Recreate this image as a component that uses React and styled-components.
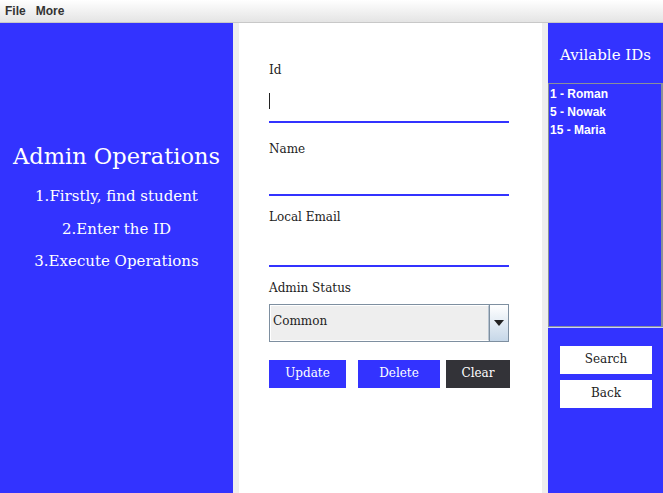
import React from "react";
import styled, { createGlobalStyle } from "styled-components";

const GlobalStyle = createGlobalStyle`
  html, body { margin: 0; padding: 0; width: 663px; height: 493px; overflow: hidden; background: #eeeeee; }
  * { box-sizing: border-box; }
`;

const BLUE = "#3333ff";
const SERIF = `"DejaVu Serif", "Liberation Serif", serif`;

const Window = styled.div`
  width: 663px;
  height: 493px;
  display: flex;
  flex-direction: column;
`;

const MenuBar = styled.div`
  height: 23px;
  display: flex;
  align-items: center;
  padding-left: 5px;
  gap: 10px;
  background: linear-gradient(#ffffff, #e4e4e4);
  border-bottom: 1px solid #c8c8c8;
  font-family: "Liberation Sans", Arial, sans-serif;
  font-weight: bold;
  font-size: 12px;
  color: #333333;
`;

const MenuItem = styled.span`
  padding-bottom: 1px;
`;

const Main = styled.div`
  flex: 1;
  display: flex;
  background: #eeeeee;
`;

const LeftPanel = styled.div`
  width: 233px;
  background: ${BLUE};
  color: #ffffff;
  font-family: ${SERIF};
  display: flex;
  flex-direction: column;
  align-items: center;
  padding-top: 117px;
`;

const Title = styled.div`
  font-size: 22.5px;
  line-height: 32px;
  margin-bottom: 8px;
`;

const Step = styled.div`
  font-size: 15px;
  line-height: 32.5px;
`;

const FormPanel = styled.div`
  width: 303px;
  margin: 0 6px;
  background: #ffffff;
  padding: 39px 0 0 30px;
  display: flex;
  flex-direction: column;
  font-family: ${SERIF};
`;

const Label = styled.div`
  font-size: 12px;
  line-height: 16px;
  height: 16px;
  color: #222222;
  margin-top: ${(p) => p.$top || 0}px;
`;

const Input = styled.div`
  width: 240px;
  height: ${(p) => p.$h}px;
  border-bottom: 2px solid ${BLUE};
  position: relative;
`;

const Caret = styled.div`
  position: absolute;
  left: 0;
  top: 15px;
  width: 1px;
  height: 16px;
  background: #222222;
`;

const Combo = styled.div`
  margin-top: 8px;
  width: 240px;
  height: 38px;
  display: flex;
  border: 1px solid #7e8fa0;
  background: #eeeeee;
`;

const ComboValue = styled.div`
  flex: 1;
  border: 1px solid #ffffff;
  border-right: 1px solid #b8c4d0;
  font-size: 12px;
  color: #222222;
  padding: 8px 0 0 2px;
`;

const ComboArrow = styled.div`
  width: 19px;
  border-left: 1px solid #7e8fa0;
  background: linear-gradient(#ffffff, #c6d7e8);
  display: flex;
  align-items: center;
  justify-content: center;
`;

const Buttons = styled.div`
  margin-top: 18px;
  display: flex;
`;

const Btn = styled.button`
  width: ${(p) => p.$w}px;
  margin-right: ${(p) => p.$mr || 0}px;
  height: 28px;
  border: none;
  padding: 0 0 2px;
  background: ${(p) => (p.$dark ? "#333338" : BLUE)};
  color: #ffffff;
  font-family: ${SERIF};
  font-size: 12px;
`;

const RightPanel = styled.div`
  flex: 1;
  background: ${BLUE};
  display: flex;
  flex-direction: column;
`;

const RightHeader = styled.div`
  height: 60px;
  display: flex;
  align-items: center;
  justify-content: center;
  color: #ffffff;
  font-family: ${SERIF};
  font-size: 15px;
  padding-top: 4px;
`;

const List = styled.div`
  height: 244px;
  border: 1px solid #8a9099;
  border-right-width: 2px;
  padding: 1px 0 0 1px;
  font-family: "Liberation Sans", Arial, sans-serif;
  font-weight: bold;
  font-size: 12px;
  line-height: 18px;
  color: #ffffff;
  box-shadow: 0 1px 0 #c8d0ff;
`;

const SideButtons = styled.div`
  display: flex;
  flex-direction: column;
  align-items: flex-start;
  padding: 19px 0 0 12px;
  gap: 6px;
`;

const SideBtn = styled.button`
  width: 92px;
  height: 28px;
  border: none;
  background: #ffffff;
  color: #222222;
  font-family: ${SERIF};
  font-size: 12px;
  padding: 0 0 3px;
`;

export default function App() {
  return (
    <Window>
      <GlobalStyle />
      <MenuBar>
        <MenuItem>File</MenuItem>
        <MenuItem>More</MenuItem>
      </MenuBar>
      <Main>
        <LeftPanel>
          <Title>Admin Operations</Title>
          <Step>1.Firstly, find student</Step>
          <Step>2.Enter the ID</Step>
          <Step>3.Execute Operations</Step>
        </LeftPanel>
        <FormPanel>
          <Label>Id</Label>
          <Input $h={45}>
            <Caret />
          </Input>
          <Label $top={18}>Name</Label>
          <Input $h={39} />
          <Label $top={13}>Local Email</Label>
          <Input $h={42} />
          <Label $top={13}>Admin Status</Label>
          <Combo>
            <ComboValue>Common</ComboValue>
            <ComboArrow>
              <svg width="10" height="6" viewBox="0 0 10 6">
                <path d="M0 0 L10 0 L5 6 Z" fill="#222" />
              </svg>
            </ComboArrow>
          </Combo>
          <Buttons>
            <Btn $w={77} $mr={12}>Update</Btn>
            <Btn $w={82} $mr={6}>Delete</Btn>
            <Btn $w={64} $dark>Clear</Btn>
          </Buttons>
        </FormPanel>
        <RightPanel>
          <RightHeader>Avilable IDs</RightHeader>
          <List>
            <div>1 - Roman</div>
            <div>5 - Nowak</div>
            <div>15 - Maria</div>
          </List>
          <SideButtons>
            <SideBtn>Search</SideBtn>
            <SideBtn>Back</SideBtn>
          </SideButtons>
        </RightPanel>
      </Main>
    </Window>
  );
}
